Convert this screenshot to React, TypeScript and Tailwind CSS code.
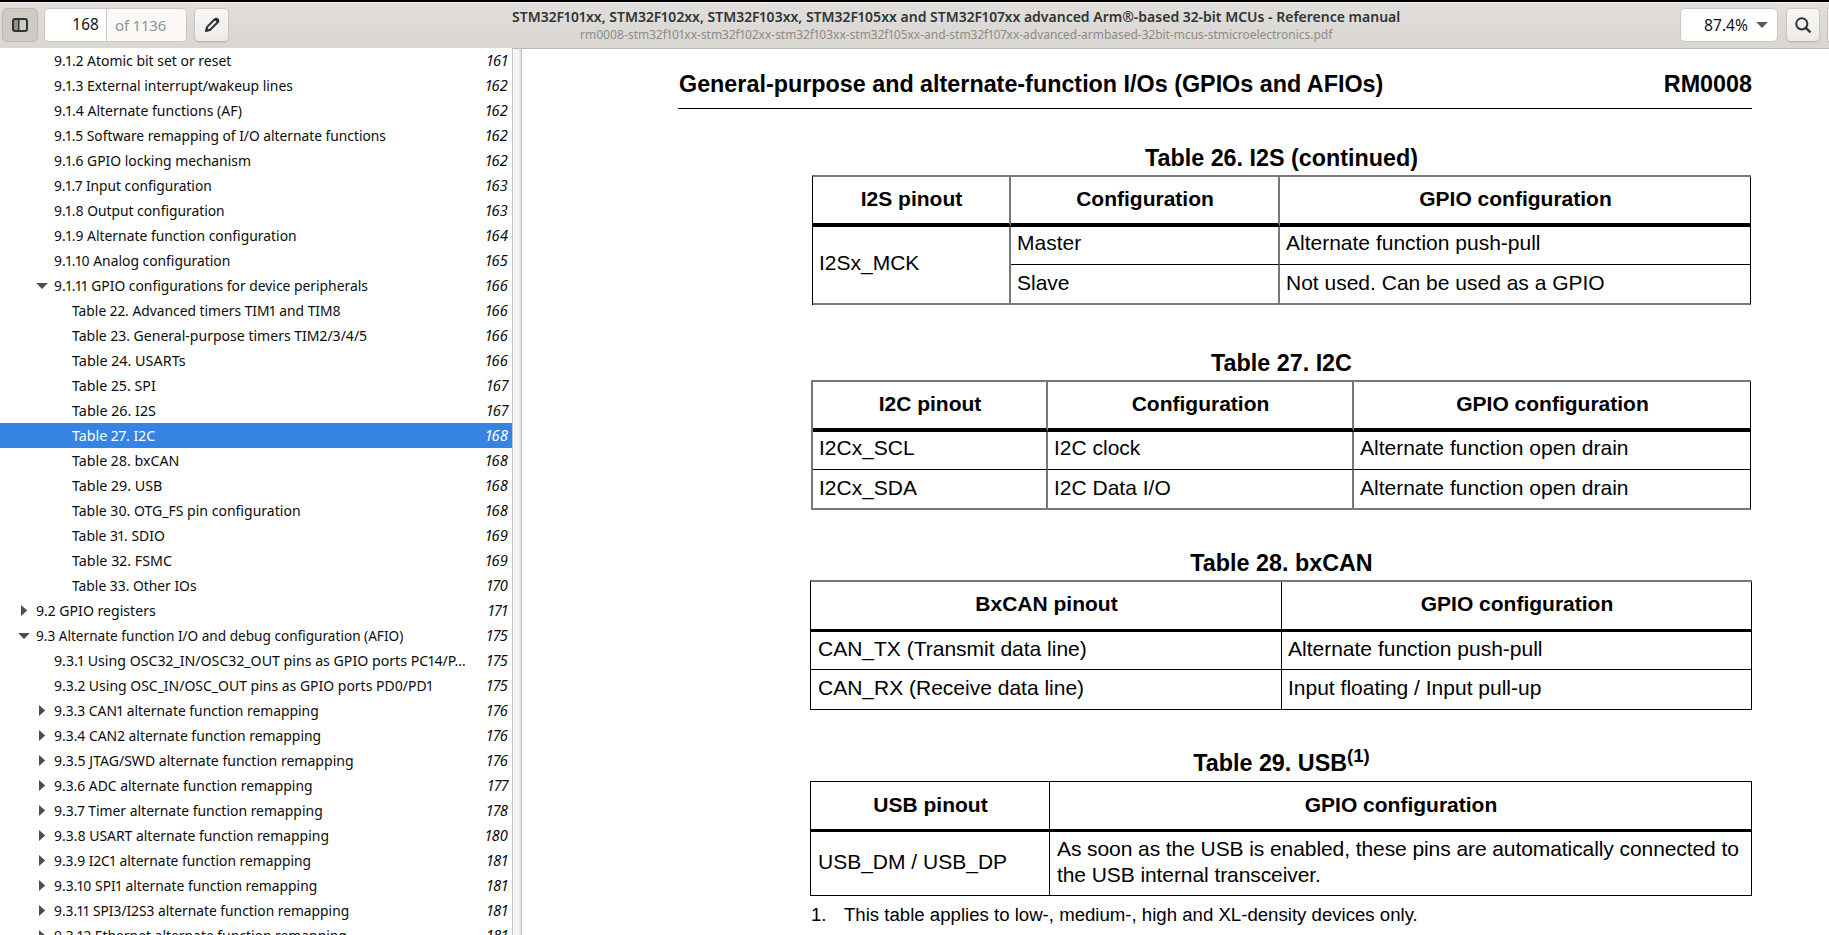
import { useLayoutEffect, useRef, useState } from "react";
import type { ReactNode } from "react";

/** A line of UI text condensed horizontally so that it occupies `width` pixels. */
function FitText({ width, className, children }: { width: number; className: string; children: ReactNode }) {
  const ref = useRef<HTMLSpanElement>(null);
  const [scale, setScale] = useState(1);
  useLayoutEffect(() => {
    if (ref.current) setScale(width / ref.current.offsetWidth);
  }, [width]);
  return (
    <span className="block shrink-0" style={{ width }}>
      <span
        ref={ref}
        className={`inline-block origin-left whitespace-nowrap [font-variant-numeric:proportional-nums] ${className}`}
        style={{ transform: `scaleX(${scale})` }}
      >
        {children}
      </span>
    </span>
  );
}

type Item = { t: string; p: number; w: number; level: 1 | 2 | 3; arrow?: "open" | "closed"; sel?: boolean };

const items: Item[] = [
  { t: "9.1.2 Atomic bit set or reset", p: 161, w: 177.2, level: 2 },
  { t: "9.1.3 External interrupt/wakeup lines", p: 162, w: 238.7, level: 2 },
  { t: "9.1.4 Alternate functions (AF)", p: 162, w: 187.7, level: 2 },
  { t: "9.1.5 Software remapping of I/O alternate functions", p: 162, w: 331.7, level: 2 },
  { t: "9.1.6 GPIO locking mechanism", p: 162, w: 197.2, level: 2 },
  { t: "9.1.7 Input configuration", p: 163, w: 157.7, level: 2 },
  { t: "9.1.8 Output configuration", p: 163, w: 170.7, level: 2 },
  { t: "9.1.9 Alternate function configuration", p: 164, w: 242.5, level: 2 },
  { t: "9.1.10 Analog configuration", p: 165, w: 176.7, level: 2 },
  { t: "9.1.11 GPIO configurations for device peripherals", p: 166, w: 313.7, level: 2, arrow: "open" },
  { t: "Table 22. Advanced timers TIM1 and TIM8", p: 166, w: 268.6, level: 3 },
  { t: "Table 23. General-purpose timers TIM2/3/4/5", p: 166, w: 295, level: 3 },
  { t: "Table 24. USARTs", p: 166, w: 113.8, level: 3 },
  { t: "Table 25. SPI", p: 167, w: 83.6, level: 3 },
  { t: "Table 26. I2S", p: 167, w: 83.4, level: 3 },
  { t: "Table 27. I2C", p: 168, w: 83.4, level: 3, sel: true },
  { t: "Table 28. bxCAN", p: 168, w: 107.6, level: 3 },
  { t: "Table 29. USB", p: 168, w: 90.8, level: 3 },
  { t: "Table 30. OTG_FS pin configuration", p: 168, w: 228.8, level: 3 },
  { t: "Table 31. SDIO", p: 169, w: 93, level: 3 },
  { t: "Table 32. FSMC", p: 169, w: 100.6, level: 3 },
  { t: "Table 33. Other IOs", p: 170, w: 124.6, level: 3 },
  { t: "9.2 GPIO registers", p: 171, w: 120.2, level: 1, arrow: "closed" },
  { t: "9.3 Alternate function I/O and debug configuration (AFIO)", p: 175, w: 367.5, level: 1, arrow: "open" },
  { t: "9.3.1 Using OSC32_IN/OSC32_OUT pins as GPIO ports PC14/P…", p: 175, w: 411.7, level: 2 },
  { t: "9.3.2 Using OSC_IN/OSC_OUT pins as GPIO ports PD0/PD1", p: 175, w: 378.5, level: 2 },
  { t: "9.3.3 CAN1 alternate function remapping", p: 176, w: 264.7, level: 2, arrow: "closed" },
  { t: "9.3.4 CAN2 alternate function remapping", p: 176, w: 267.5, level: 2, arrow: "closed" },
  { t: "9.3.5 JTAG/SWD alternate function remapping", p: 176, w: 299.2, level: 2, arrow: "closed" },
  { t: "9.3.6 ADC alternate function remapping", p: 177, w: 258.5, level: 2, arrow: "closed" },
  { t: "9.3.7 Timer alternate function remapping", p: 178, w: 268.9, level: 2, arrow: "closed" },
  { t: "9.3.8 USART alternate function remapping", p: 180, w: 274.6, level: 2, arrow: "closed" },
  { t: "9.3.9 I2C1 alternate function remapping", p: 181, w: 257.5, level: 2, arrow: "closed" },
  { t: "9.3.10 SPI1 alternate function remapping", p: 181, w: 263.5, level: 2, arrow: "closed" },
  { t: "9.3.11 SPI3/I2S3 alternate function remapping", p: 181, w: 295.6, level: 2, arrow: "closed" },
  { t: "9.3.12 Ethernet alternate function remapping", p: 181, w: 292.5, level: 2, arrow: "closed" },
];

const indents = { 1: "pl-4", 2: "pl-[34px]", 3: "pl-[52px]" };

function Arrow({ kind }: { kind?: "open" | "closed" }) {
  return (
    <svg className="mr-1 h-[25px] w-4 shrink-0" viewBox="0 0 16 25" fill="#4a4e50">
      {kind === "open" && <path d="M2.2 10h11.6L8 16z" />}
      {kind === "closed" && <path d="M5 7v11l6.2-5.5z" />}
    </svg>
  );
}

function Outline() {
  return (
    <nav className="-mt-px w-[512px] shrink-0 overflow-hidden bg-white">
      {items.map((it) => (
        <div
          key={it.t}
          className={`flex h-[25px] justify-between pr-1 text-[14.667px] leading-[25px] ${indents[it.level]} ${
            it.sel ? "bg-[#3584e4] text-white" : "text-[#0c0c0c]"
          }`}
        >
          <div className="flex">
            <Arrow kind={it.arrow} />
            <FitText width={it.w} className="">
              {it.t}
            </FitText>
          </div>
          <span className="italic [font-variant-numeric:proportional-nums]">{it.p}</span>
        </div>
      ))}
    </nav>
  );
}

function Header() {
  const button =
    "flex h-[34px] shrink-0 items-center justify-center rounded-[5px] border border-[#cdc7c2] border-b-[#bfb8b1] bg-linear-to-b from-[#f8f7f6] to-[#edebe9] shadow-[0_1px_2px_rgba(0,0,0,0.08)]";
  return (
    <header className="flex h-[47px] shrink-0 border-t border-b border-t-[#f3f2f0] border-b-[#bfb8b1] bg-linear-to-b from-[#e1dedb] to-[#dad6d2] pt-[5px] pl-[2px] text-[#2e3436]">
      <div className="flex h-[34px] w-9 shrink-0 items-center justify-center rounded-[5px] border border-[#bfb9b2] bg-[#cfcac4]">
        <svg className="size-4" viewBox="0 0 16 16">
          <path d="M2 2h4v12H2z" fill="#8f8f8c" />
          <rect x="1" y="2" width="14" height="12" rx="2" fill="none" stroke="#2e3436" strokeWidth="2" />
          <path d="M6 2h1.5v12H6z" fill="#2e3436" />
        </svg>
      </div>
      <div className="ml-[6px] flex h-[34px] w-[143px] shrink-0 overflow-hidden rounded-[5px] border border-[#cdc7c2] text-[15.4px] leading-8">
        <div className="w-[62px] border-r border-[#cdc7c2] bg-white pr-[7px] text-right text-[#111] tracking-[0.1px]">168</div>
        <div className="flex-1 bg-[#faf9f8] pl-2 text-[15px] tracking-[-0.2px] text-[#929595]">of 1136</div>
      </div>
      <div className={`${button} ml-[7px] w-[35px]`}>
        <svg className="size-4" viewBox="0 0 16 16" fill="none">
          <path
            d="M10.7 2.3a2.1 2.1 0 0 1 3 3L5.9 13 1.9 14.1 3 10.1z"
            stroke="#2e3436"
            strokeWidth="2"
            strokeLinejoin="round"
          />
          <path d="M3 10.6 5.4 13 1.6 14.4zM9.9 2.6l3.5 3.5 1-1.2c.8-1-.1-2.6-1.2-3.2-.9-.5-1.6-.4-2.2.1z" fill="#2e3436" />
        </svg>
      </div>
      <div className="-mt-px flex min-w-0 flex-1 flex-col items-center pl-[3px]">
        <div className="h-[18px] leading-[19px]">
          <FitText width={888.5} className="text-[14.667px] font-semibold">
            STM32F101xx, STM32F102xx, STM32F103xx, STM32F105xx and STM32F107xx advanced Arm®-based 32-bit MCUs - Reference manual
          </FitText>
        </div>
        <div className="h-4 leading-4">
          <FitText width={752} className="text-[12.2px] text-[#8b8c8a]">
            rm0008-stm32f101xx-stm32f102xx-stm32f103xx-stm32f105xx-and-stm32f107xx-advanced-armbased-32bit-mcus-stmicroelectronics.pdf
          </FitText>
        </div>
      </div>
      <div className="flex h-[34px] w-[98px] shrink-0 justify-end rounded-[5px] border border-[#cdc7c2] bg-white pr-[9px] text-[15.6px] leading-8 text-[#111]">
        87.4%
        <svg className="ml-2 h-8 w-3" viewBox="0 0 12 32" fill="#55595a">
          <path d="M.2 13h11.6L6 19z" />
        </svg>
      </div>
      <div className={`${button} ml-2 w-[34px]`}>
        <svg className="size-4" viewBox="0 0 16 16" fill="none" stroke="#2e3436" strokeWidth="2">
          <circle cx="6.8" cy="6.8" r="5.6" />
          <path d="m10.8 10.8 4.6 4.6" strokeWidth="2.4" />
        </svg>
      </div>
      <div className={`${button} ml-[7px] w-[2px] rounded-r-none border-r-0`} />
    </header>
  );
}

function Caption({ className, children }: { className: string; children: ReactNode }) {
  return <h2 className={`h-7 pl-px text-center text-[23.33px] leading-7 font-bold ${className}`}>{children}</h2>;
}

function Cell({ className, children }: { className: string; children: ReactNode }) {
  return <div className={`whitespace-nowrap border-black ${className}`}>{children}</div>;
}

const soft = "border-r-2 border-r-[#787878]";
const softBottom = "border-b-2 border-b-[#787878]";
const head = "border-b-black pl-px text-center font-bold";

function Document() {
  return (
    <main className="flex-1 overflow-hidden bg-white font-['Liberation_Sans',sans-serif] text-[21px] leading-6 text-black">
      <div className="ml-[156px] flex w-[1074px] justify-between border-b border-black pt-[21px] pb-[10px] pl-px text-[23.33px] leading-7 font-bold">
        <h1>General-purpose and alternate-function I/Os (GPIOs and AFIOs)</h1>
        <span>RM0008</span>
      </div>

      <div className="ml-[288px] w-[942px]">
        <Caption className="mt-[35px]">Table 26. I2S (continued)</Caption>
        <div className="mt-[3px] ml-[2px] grid w-[939px] grid-cols-[198px_269px_471px] grid-rows-[50px_38px_40px] border-t-2 border-l border-t-[#787878] border-l-black">
          <Cell className={`${head} ${soft} border-b-4 pt-[10px]`}>I2S pinout</Cell>
          <Cell className={`${head} ${soft} border-b-4 pt-[10px]`}>Configuration</Cell>
          <Cell className={`${head} border-r border-b-4 pt-[10px]`}>GPIO configuration</Cell>
          <Cell className={`${soft} ${softBottom} row-span-2 pt-6 pl-[6px]`}>I2Sx_MCK</Cell>
          <Cell className={`${soft} border-b border-b-black pt-1 pl-[6px]`}>Master</Cell>
          <Cell className="border-r border-b pt-1 pl-[6px]">Alternate function push-pull</Cell>
          <Cell className={`${soft} ${softBottom} pt-[6px] pl-[6px]`}>Slave</Cell>
          <Cell className={`${softBottom} border-r pt-[6px] pl-[6px]`}>Not used. Can be used as a GPIO</Cell>
        </div>

        <Caption className="mt-11">Table 27. I2C</Caption>
        <div className="mt-[3px] ml-px grid w-[940px] grid-cols-[235px_306px_397px] grid-rows-[50px_38px_40px] border-t-2 border-l-2 border-[#787878]">
          <Cell className={`${head} ${soft} border-b-4 pt-[10px]`}>I2C pinout</Cell>
          <Cell className={`${head} ${soft} border-b-4 pt-[10px]`}>Configuration</Cell>
          <Cell className={`${head} border-r border-b-4 pt-[10px]`}>GPIO configuration</Cell>
          <Cell className={`${soft} border-b border-b-black pt-1 pl-[6px]`}>I2Cx_SCL</Cell>
          <Cell className={`${soft} border-b border-b-black pt-1 pl-[6px]`}>I2C clock</Cell>
          <Cell className="border-r border-b pt-1 pl-[6px]">Alternate function open drain</Cell>
          <Cell className={`${soft} ${softBottom} pt-[6px] pl-[6px]`}>I2Cx_SDA</Cell>
          <Cell className={`${soft} ${softBottom} pt-[6px] pl-[6px]`}>I2C Data I/O</Cell>
          <Cell className={`${softBottom} border-r pt-[6px] pl-[6px]`}>Alternate function open drain</Cell>
        </div>

        <Caption className="mt-[39px]">Table 28. bxCAN</Caption>
        <div className="mt-[3px] grid w-[942px] grid-cols-[471px_470px] grid-rows-[50px_38px_40px] border-t-2 border-l border-t-[#787878] border-l-black">
          <Cell className={`${head} border-r border-b-3 pt-[10px]`}>BxCAN pinout</Cell>
          <Cell className={`${head} border-r border-b-3 pt-[10px]`}>GPIO configuration</Cell>
          <Cell className="border-r border-b pt-[5px] pl-[7px]">CAN_TX (Transmit data line)</Cell>
          <Cell className="border-r border-b pt-[5px] pl-[6px]">Alternate function push-pull</Cell>
          <Cell className="border-r border-b pt-[6px] pl-[7px]">CAN_RX (Receive data line)</Cell>
          <Cell className="border-r border-b pt-[6px] pl-[6px]">Input floating / Input pull-up</Cell>
        </div>

        <Caption className="mt-[39px]">
          Table 29. USB<span className="align-[9px] text-[18.6px] leading-0">(1)</span>
        </Caption>
        <div className="mt-1 grid w-[942px] grid-cols-[239px_702px] grid-rows-[50px_64px] border-t border-l border-black">
          <Cell className={`${head} border-r border-b-3 pt-[11px]`}>USB pinout</Cell>
          <Cell className={`${head} border-r border-b-3 pt-[11px]`}>GPIO configuration</Cell>
          <Cell className="border-r border-b pt-[18px] pl-[7px]">USB_DM / USB_DP</Cell>
          <Cell className="border-r border-b pt-1 pl-[7px] leading-[26px] tracking-[-0.08px]">
            As soon as the USB is enabled, these pins are automatically connected to
            <br />
            the USB internal transceiver.
          </Cell>
        </div>
        <p className="mt-2 flex pl-px text-[18.63px] leading-[22px]">
          <span className="w-[33px]">1.</span>
          <span>This table applies to low-, medium-, high and XL-density devices only.</span>
        </p>
      </div>
    </main>
  );
}

export default function App() {
  return (
    <div className="flex h-[935px] w-[1829px] flex-col overflow-hidden border-t-2 border-black bg-white font-['Noto_Sans',sans-serif]">
      <Header />
      <div className="flex min-h-0 flex-1">
        <Outline />
        <div className="w-[10px] shrink-0 border-r border-l border-r-[#c3c2c0] border-l-[#cdc7c2] bg-linear-to-r from-[#f6f5f4] from-70% to-[#dddbd9]" />
        <Document />
      </div>
    </div>
  );
}
